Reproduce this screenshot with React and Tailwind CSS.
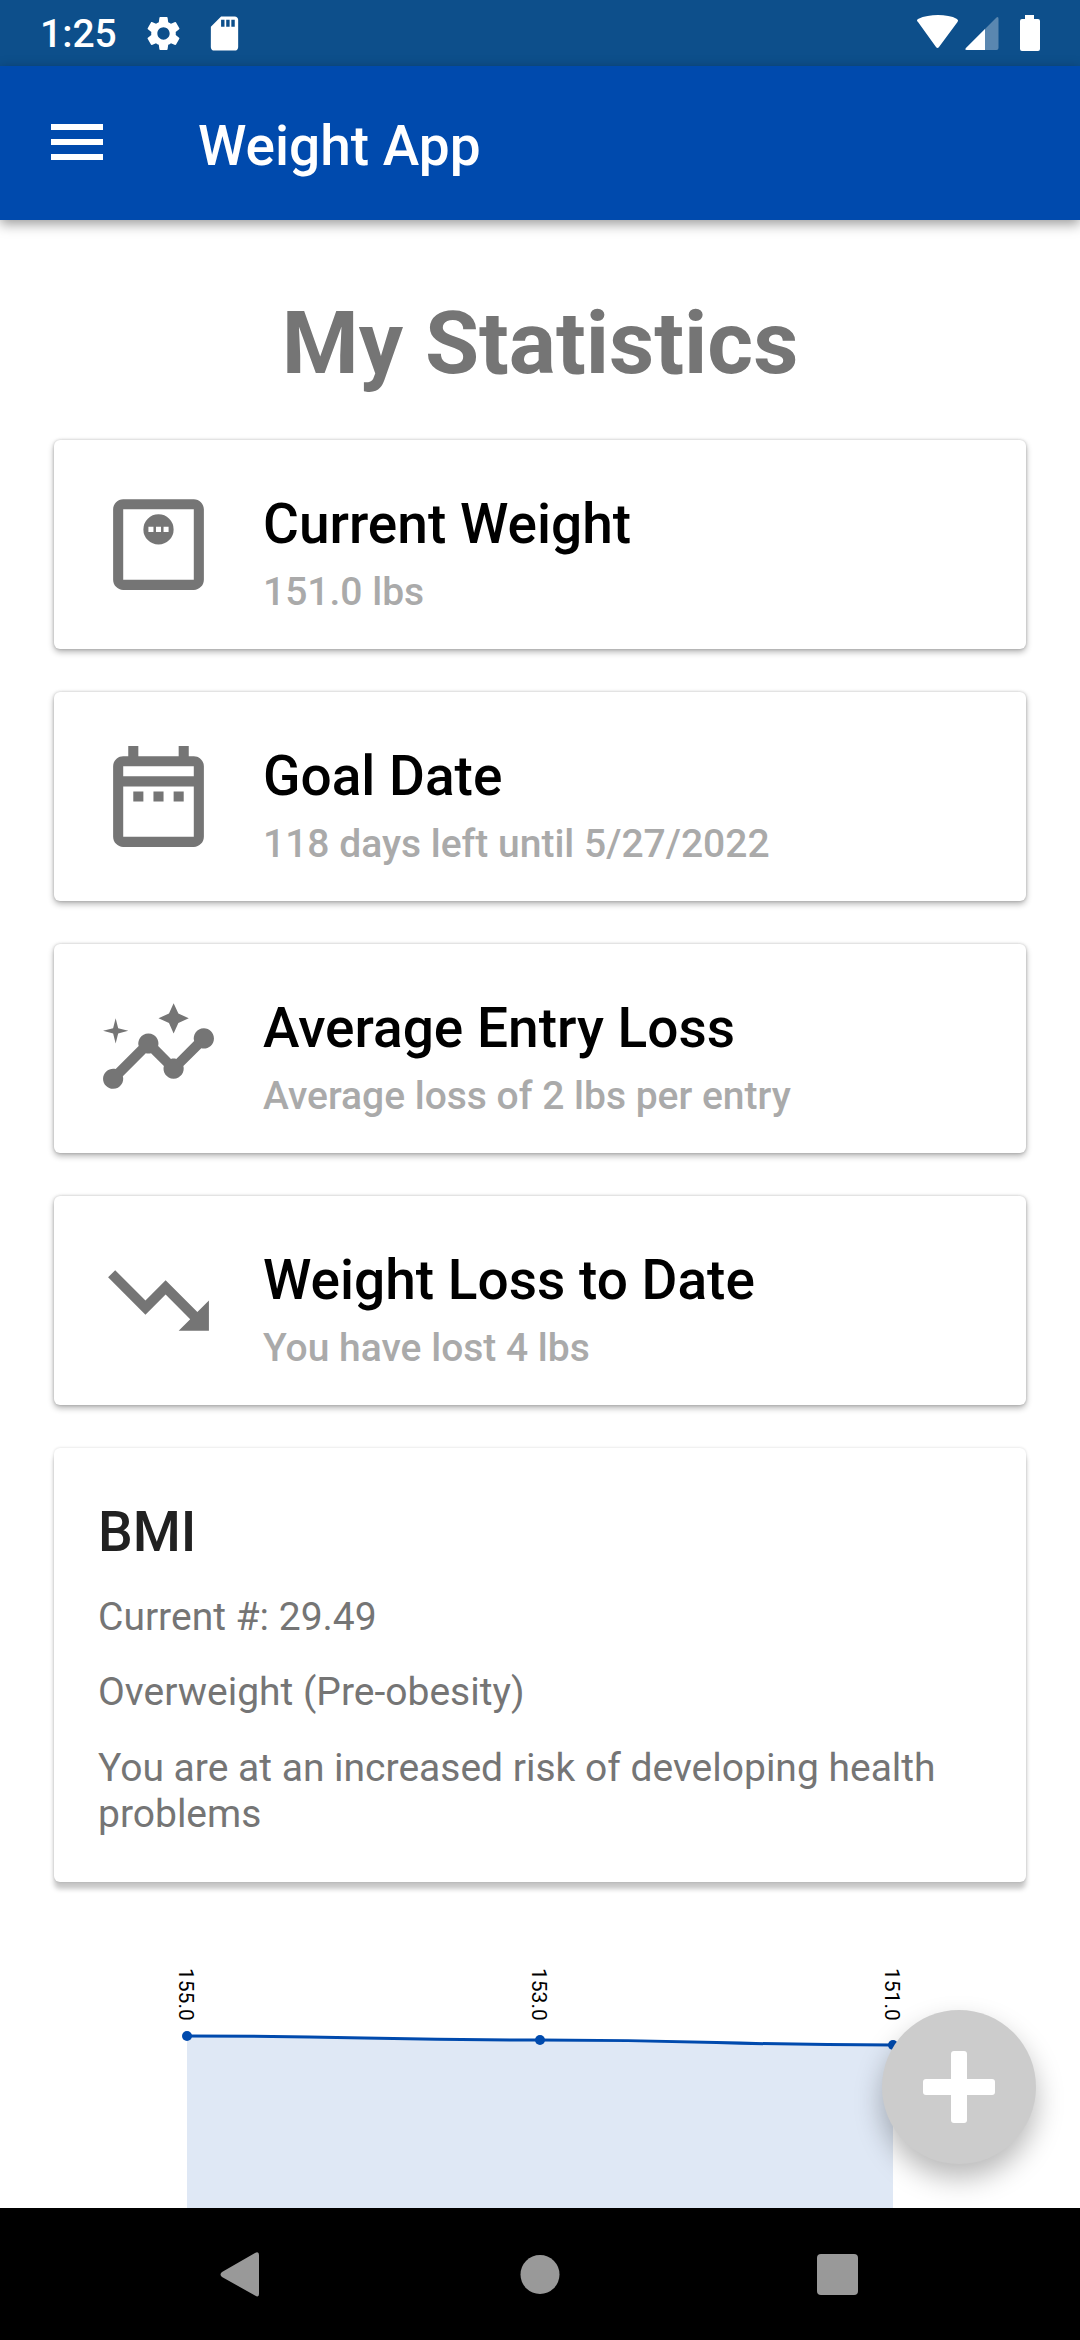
import { MdInsights, MdSdStorage, MdSettings, MdTrendingDown } from "react-icons/md";

function ScaleIcon({ className }) {
  return (
    <svg viewBox="0 0 24 24" fill="currentColor" fillRule="evenodd" className={className} aria-hidden="true">
      <path d="M5 3h14c1.1 0 2 .9 2 2v14c0 1.1-.9 2-2 2H5c-1.1 0-2-.9-2-2V5c0-1.1.9-2 2-2zm0 2v14h14V5z" />
      <path d="M12 6a3 3 0 1 0 0 6 3 3 0 0 0 0-6zm-2 2.5h1v1h-1zm1.500 0h1v1h-1zm1.500 0h1v1h-1z" />
    </svg>
  );
}

function CalendarIcon({ className }) {
  return (
    <svg viewBox="0 0 24 24" fill="currentColor" fillRule="evenodd" className={className} aria-hidden="true">
      <path d="M6 2h2v2h8V2h2v2h1c1.1 0 2 .9 2 2v14c0 1.1-.9 2-2 2H5c-1.1 0-2-.9-2-2V6c0-1.1.9-2 2-2h1zM5 6v2h14V6zm0 4v10h14V10z" />
      <path d="M7 11h2v2H7zm4 0h2v2h-2zm4 0h2v2h-2z" />
    </svg>
  );
}

const stats = [
  { title: "Current Weight", detail: "151.0 lbs", Icon: ScaleIcon },
  { title: "Goal Date", detail: "118 days left until 5/27/2022", Icon: CalendarIcon },
  { title: "Average Entry Loss", detail: "Average loss of 2 lbs per entry", Icon: MdInsights },
  { title: "Weight Loss to Date", detail: "You have lost 4 lbs", Icon: MdTrendingDown },
];

const entries = [
  { label: "155.0", x: 187, y: 154 },
  { label: "153.0", x: 540, y: 158 },
  { label: "151.0", x: 893, y: 163 },
];

function StatusBar() {
  return (
    <div className="flex h-[66px] shrink-0 items-center justify-between bg-[#0d4f8b] px-10 text-white">
      <div className="flex items-center">
        <span className="pt-0.5 text-[39px] leading-[46px] font-medium">1:25</span>
        <MdSettings className="ml-[26px] size-[41px]" />
        <MdSdStorage className="ml-5 size-[41px]" />
      </div>
      <svg viewBox="0 0 124 40" className="h-10 w-[124px]" aria-hidden="true">
        <path
          d="M2 9Q0 7.500 2 6C8 3 15 2 22 2S36 3 41 6Q43 7.500 41.500 9L23 34Q21.500 36 20 34z"
          fill="white"
        />
        <path d="M80.500 4.500Q82.500 3 82.500 6V35Q82.500 37 80.500 37H51Q48 37 50.500 34.500z" fill="white" fillOpacity="0.32" />
        <path d="M69 16V37H51Q48 37 50.500 34.500z" fill="white" />
        <path d="M109 2h9v4h4q2 0 2 2v28q0 2-2 2h-16q-2 0-2-2V8q0-2 2-2h3z" fill="white" />
      </svg>
    </div>
  );
}

function StatCard({ title, detail, Icon }) {
  return (
    <section className="flex items-start gap-11 rounded-md bg-white px-11 pt-11 pb-[34px] shadow-[0_3px_6px_rgba(0,0,0,0.3),0_0_3px_rgba(0,0,0,0.2)]">
      <Icon className="size-[121px] shrink-0 text-[#757575]" />
      <div className="pt-2">
        <h2 className="text-[55px] leading-[64px] font-medium text-black">{title}</h2>
        <p className="mt-[14px] text-[39px] leading-[45px] font-medium text-[#aaaaaa]">{detail}</p>
      </div>
    </section>
  );
}

function WeightChart() {
  return (
    <svg viewBox="0 0 1080 327" className="block w-full" role="img" aria-label="Weight entries">
      <path
        d="M187 154C364 154 364 158 540 158S717 163 893 163V327H187z"
        fill="#dfe8f5"
      />
      <path
        d="M187 154C364 154 364 158 540 158S717 163 893 163"
        fill="none"
        stroke="#004aad"
        strokeWidth="3"
      />
      {entries.map(({ label, x, y }) => (
        <g key={label}>
          <circle cx={x} cy={y} r="5" fill="#004aad" />
          <text transform={`translate(${x - 8} 86) rotate(90)`} fontSize="21" fill="black">
            {label}
          </text>
        </g>
      ))}
    </svg>
  );
}

export default function App() {
  return (
    <div className="flex h-screen flex-col overflow-hidden bg-white font-['Roboto',sans-serif]">
      <StatusBar />
      <header className="relative z-10 flex h-[154px] shrink-0 items-center bg-[#004aad] px-11 text-white shadow-[0_4px_12px_rgba(0,0,0,0.4)]">
        <button type="button" aria-label="Open menu" className="size-[66px]">
          <svg viewBox="0 0 66 66" fill="currentColor" className="size-full" aria-hidden="true">
            <path d="M7 14h52v6H7zm0 15h52v6H7zm0 15h52v6H7z" />
          </svg>
        </button>
        <h1 className="ml-22 pt-1.5 text-[55px] leading-[64px] font-medium">Weight App</h1>
      </header>

      <div className="relative flex min-h-0 flex-1 flex-col">
        <main className="min-h-0 flex-1 overflow-hidden">
          <h2 className="pt-[71px] pb-[46px] text-center text-[88px] leading-[103px] font-bold text-[#757575]">
            My Statistics
          </h2>
          <div className="flex flex-col gap-[43px] px-[54px]">
            {stats.map((stat) => (
              <StatCard key={stat.title} {...stat} />
            ))}
            <section className="flex flex-col gap-[30px] rounded-md bg-white px-11 pt-[51px] pb-[45px] text-[39px] leading-[45px] text-[#757575] shadow-[0_7px_5px_rgba(0,0,0,0.22),0_0_3px_rgba(0,0,0,0.16)]">
              <h2 className="text-[55px] leading-[66px] font-medium text-[#212121]">BMI</h2>
              <p>Current #: 29.49</p>
              <p>Overweight (Pre-obesity)</p>
              <p className="leading-[46px]">You are at an increased risk of developing health problems</p>
            </section>
          </div>
          <WeightChart />
        </main>
        <button
          type="button"
          aria-label="Add entry"
          className="absolute right-11 bottom-11 flex size-[154px] items-center justify-center rounded-full bg-[#cccccc] shadow-[0_14px_28px_rgba(0,0,0,0.28)]"
        >
          <svg viewBox="0 0 72 72" fill="white" className="size-[72px]" aria-hidden="true">
            <rect x="0" y="28" width="72" height="16" rx="3" />
            <rect x="28" y="0" width="16" height="72" rx="3" />
          </svg>
        </button>
      </div>

      <nav className="flex h-[132px] shrink-0 items-center justify-center gap-[232px] bg-black text-[#999999]">
        <button type="button" aria-label="Back" className="size-[66px]">
          <svg viewBox="0 0 66 66" fill="currentColor" className="size-full" aria-hidden="true">
            <path d="M50 14V53Q50 57 46 54.500L13 36Q10 33.500 13 31L46 12Q50 10 50 14z" />
          </svg>
        </button>
        <button type="button" aria-label="Home" className="size-[66px]">
          <svg viewBox="0 0 66 66" fill="currentColor" className="size-full" aria-hidden="true">
            <circle cx="33" cy="33.500" r="19.500" />
          </svg>
        </button>
        <button type="button" aria-label="Recent apps" className="size-[66px]">
          <svg viewBox="0 0 66 66" fill="currentColor" className="size-full" aria-hidden="true">
            <rect x="12" y="13" width="41" height="41" rx="4" />
          </svg>
        </button>
      </nav>
    </div>
  );
}
